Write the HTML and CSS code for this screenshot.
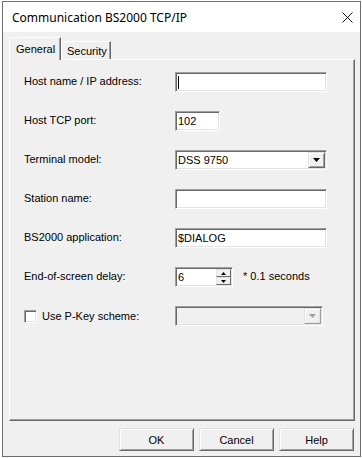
FILE: index.html
```html
<!DOCTYPE html>
<html lang="en">
<head>
    <meta charset="UTF-8">
    <title>Communication BS2000 TCP/IP</title>
    <link rel="stylesheet" href="styles.css">
</head>
<body>
    <div class="window">
        <div class="titlebar">
            <span class="title">Communication BS2000 TCP/IP</span>
            <svg class="close" width="11" height="11" viewBox="0 0 11 11"><path d="M0.5 0.5L10.5 10.5M10.5 0.5L0.5 10.5" stroke="#111" stroke-width="1" fill="none"/></svg>
        </div>
        <div class="client">
            <div class="tabs">
                <div class="tab active">General</div>
                <div class="tab">Security</div>
            </div>
            <div class="panel">
                <div class="row">
                    <label class="caption">Host name / IP address:</label>
                    <div class="field wide"><span class="caret"></span></div>
                </div>
                <div class="row">
                    <label class="caption">Host TCP port:</label>
                    <div class="field port"><span class="value">102</span></div>
                </div>
                <div class="row">
                    <label class="caption">Terminal model:</label>
                    <div class="field wide combo">
                        <span class="value">DSS 9750</span>
                        <span class="drop"><svg width="7" height="4" viewBox="0 0 7 4"><path d="M0 0H7L3.5 4Z" fill="#000"/></svg></span>
                    </div>
                </div>
                <div class="row">
                    <label class="caption">Station name:</label>
                    <div class="field wide"></div>
                </div>
                <div class="row">
                    <label class="caption">BS2000 application:</label>
                    <div class="field wide"><span class="value">$DIALOG</span></div>
                </div>
                <div class="row">
                    <label class="caption">End-of-screen delay:</label>
                    <div class="field spin">
                        <span class="value">6</span>
                        <span class="spin-btns">
                            <span class="spin-btn"><svg width="5" height="3" viewBox="0 0 5 3"><path d="M2.5 0L5 3H0Z" fill="#000"/></svg></span>
                            <span class="spin-btn"><svg width="5" height="3" viewBox="0 0 5 3"><path d="M0 0H5L2.5 3Z" fill="#000"/></svg></span>
                        </span>
                    </div>
                    <span class="unit">* 0.1 seconds</span>
                </div>
                <div class="row">
                    <label class="caption check-caption"><span class="checkbox"></span>Use P-Key scheme:</label>
                    <div class="field combo disabled">
                        <span class="value"></span>
                        <span class="drop"><svg width="7" height="4" viewBox="0 0 7 4"><path d="M0 0H7L3.5 4Z" fill="#a0a0a0"/></svg></span>
                    </div>
                </div>
            </div>
            <div class="buttons">
                <button class="btn">OK</button>
                <button class="btn">Cancel</button>
                <button class="btn">Help</button>
            </div>
        </div>
    </div>
</body>
</html>
```

FILE: styles.css
```css
body {
    margin: 0;
    padding: 1px 0 0 2px;
    background: #fff;
    font-family: "Liberation Sans", Arial, sans-serif;
    font-size: 11px;
    color: #000;
}
.window {
    width: 359px;
    height: 456px;
    box-sizing: border-box;
    border: 1px solid #6e6e6e;
    background: #f0f0f0;
    display: flex;
    flex-direction: column;
}
.titlebar {
    height: 30px;
    background: #fff;
    display: flex;
    align-items: center;
    justify-content: space-between;
    padding: 0 7px 0 9px;
}
.title {
    font-family: "Noto Sans", sans-serif;
    font-size: 12px;
    color: #000;
}
.client {
    flex: 1;
    padding: 5px 5px 0 6px;
}
.tabs {
    display: flex;
    align-items: flex-end;
    height: 23px;
    margin-bottom: -1px;
    position: relative;
    z-index: 1;
}
.tab {
    height: 18px;
    box-sizing: border-box;
    margin-bottom: 1px;
    width: 50px;
    padding-left: 5px;
    display: flex;
    align-items: center;
    background: #f0f0f0;
    border-top: 1px solid #fff;
    border-left: 1px solid #fff;
    border-right: 1px solid #696969;
    box-shadow: inset -1px 0 #a0a0a0;
}
.tab.active {
    height: 23px;
    width: 52px;
    margin-bottom: 0;
    padding-left: 6px;
}
.panel {
    height: 362px;
    box-sizing: border-box;
    border-top: 1px solid #fff;
    border-left: 1px solid #fff;
    border-right: 1px solid #696969;
    border-bottom: 1px solid #696969;
    box-shadow: inset -1px -1px #a0a0a0;
    padding: 12px 0 0 14px;
    display: flex;
    flex-direction: column;
    gap: 19px;
}
.row {
    display: flex;
    align-items: center;
    height: 20px;
}
.caption {
    width: 151px;
    flex-shrink: 0;
    margin-top: -2px;
}
.check-caption {
    display: flex;
    align-items: center;
    margin-top: 0;
}
.checkbox {
    width: 13px;
    height: 13px;
    box-sizing: border-box;
    background: #fff;
    border-top: 1px solid #a0a0a0;
    border-left: 1px solid #a0a0a0;
    border-right: 1px solid #fff;
    border-bottom: 1px solid #fff;
    box-shadow: inset 1px 1px #696969, inset -1px -1px #e3e3e3;
    margin-right: 5px;
}
.field {
    height: 20px;
    box-sizing: border-box;
    background: #fff;
    border-top: 1px solid #a0a0a0;
    border-left: 1px solid #a0a0a0;
    border-right: 1px solid #fff;
    border-bottom: 1px solid #fff;
    box-shadow: inset 1px 1px #696969, inset -1px -1px #e3e3e3;
    padding: 1px;
    display: flex;
    align-items: stretch;
}
.field.wide {
    width: 152px;
}
.field.port {
    width: 45px;
}
.field.spin {
    width: 58px;
}
.field.disabled {
    width: 148px;
    background: #f0f0f0;
}
.value {
    flex: 1;
    padding-left: 1px;
    display: flex;
    align-items: center;
}
.caret {
    width: 1px;
    height: 13px;
    margin: 2px 0 0 1px;
    background: #000;
}
.drop {
    width: 17px;
    box-sizing: border-box;
    background: #f0f0f0;
    border-top: 1px solid #e3e3e3;
    border-left: 1px solid #e3e3e3;
    border-right: 1px solid #696969;
    border-bottom: 1px solid #696969;
    box-shadow: inset 1px 1px #fff, inset -1px -1px #a0a0a0;
    display: flex;
    align-items: center;
    justify-content: center;
}
.disabled .drop {
    border-right-color: #a0a0a0;
    border-bottom-color: #a0a0a0;
    box-shadow: inset 1px 1px #fff, inset -1px -1px #e3e3e3;
}
.spin-btns {
    width: 15px;
    display: flex;
    flex-direction: column;
}
.spin-btn {
    flex: 1;
    box-sizing: border-box;
    background: #f0f0f0;
    border-top: 1px solid #e3e3e3;
    border-left: 1px solid #e3e3e3;
    border-right: 1px solid #696969;
    border-bottom: 1px solid #696969;
    display: flex;
    align-items: center;
    justify-content: center;
}
.unit {
    margin-left: 10px;
    margin-top: -2px;
}
.buttons {
    display: flex;
    justify-content: flex-end;
    gap: 5px;
    margin-top: 7px;
    padding-right: 1px;
}
.btn {
    width: 75px;
    height: 23px;
    box-sizing: border-box;
    font-family: "Liberation Sans", Arial, sans-serif;
    font-size: 11px;
    color: #000;
    background: #f0f0f0;
    border-top: 1px solid #e3e3e3;
    border-left: 1px solid #e3e3e3;
    border-right: 1px solid #696969;
    border-bottom: 1px solid #696969;
    box-shadow: inset 1px 1px #fff, inset -1px -1px #a0a0a0;
    padding: 0;
}
```
